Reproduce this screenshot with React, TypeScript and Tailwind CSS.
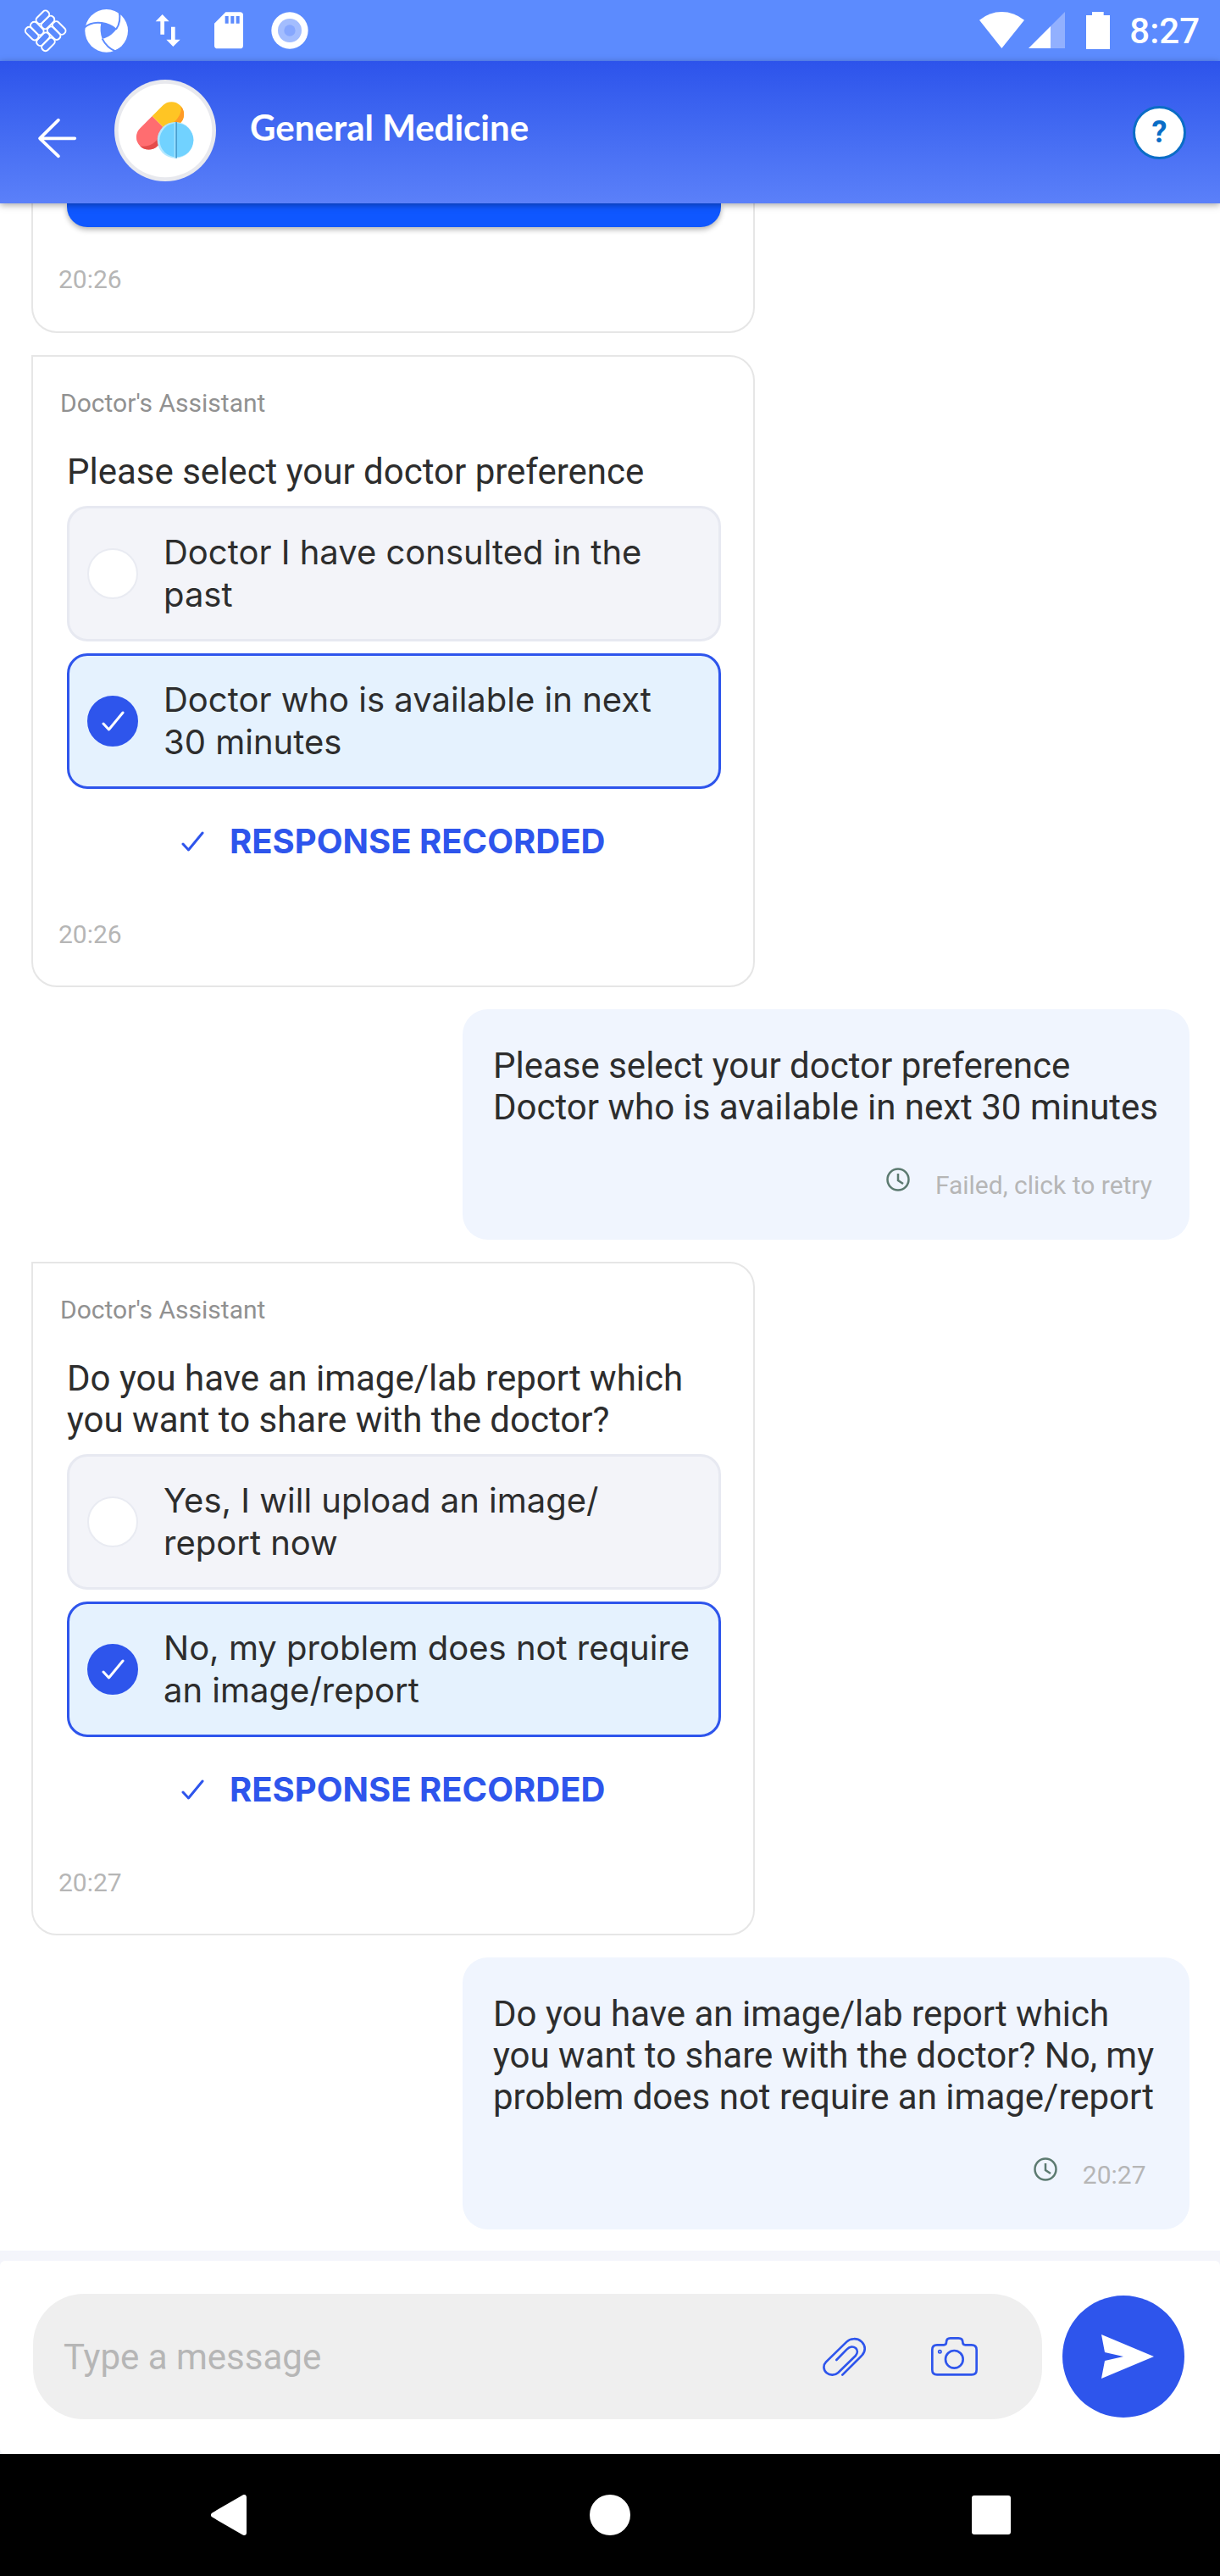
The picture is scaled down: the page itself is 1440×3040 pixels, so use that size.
import { useState } from "react";
import type { ReactNode } from "react";

function StatusBar() {
  return (
    <div className="flex h-[72px] items-center justify-between bg-[#5c8bfe] pr-6 pl-[18px] text-white">
      <div className="flex" aria-hidden="true">
        <svg className="size-[72px]" viewBox="54 0 216 216" fill="none" stroke="currentColor" strokeWidth="6">
          <g transform="translate(161 109) rotate(45)">
            <rect x="-54" y="-54" width="26" height="54" rx="12" />
            <rect x="-28" y="-54" width="26" height="54" rx="12" />
            <rect x="0" y="-54" width="54" height="26" rx="12" />
            <rect x="0" y="-28" width="54" height="26" rx="12" />
            <rect x="-54" y="2" width="54" height="26" rx="12" />
            <rect x="-54" y="28" width="54" height="26" rx="12" />
            <rect x="2" y="0" width="26" height="54" rx="12" />
            <rect x="28" y="0" width="26" height="54" rx="12" />
          </g>
        </svg>
        <svg className="size-[72px]" viewBox="270 0 216 216" fill="none">
          <circle cx="377" cy="109" r="76" fill="currentColor" />
          <path d="M358 82C380 84 398 92 411 104C398 122 382 133 362 137C355 120 354 100 358 82Z" fill="#5c8bfe" />
          <g stroke="#5c8bfe" strokeWidth="6">
            <path d="M298 98C316 82 338 78 360 81C382 84 398 92 411 104" />
            <path d="M411 104C424 86 427 62 421 36" />
            <path d="M362 137C371 155 384 172 410 182" />
          </g>
          <path d="M418 34L432 50L446 68L428 46Z" fill="#5c8bfe" />
          <path d="M400 182L424 170L428 186L404 190Z" fill="#5c8bfe" />
        </svg>
        <svg className="size-[72px]" viewBox="486 0 216 216" fill="currentColor">
          <path d="M575 51L599 76H582V122H568V76H551Z" />
          <path d="M613 165L589 140H606V95H620V140H638Z" />
        </svg>
        <svg className="size-[72px]" viewBox="702 0 216 216" fill="currentColor">
          <path d="M799 43H850Q861 43 861 54V161Q861 172 850 172H770Q759 172 759 161V83Z" />
          <path d="M797 57h12v26h-12zM817 57h12v26h-12zM836 57h12v26h-12z" fill="#5c8bfe" />
        </svg>
        <svg className="size-[72px]" viewBox="918 0 216 216">
          <circle cx="1026" cy="108" r="65" fill="#fff" />
          <circle cx="1026" cy="108" r="42" fill="#a3bdfe" />
          <circle cx="1026" cy="108" r="20" fill="#86a7fe" />
        </svg>
      </div>
      <div className="flex items-center">
        <svg className="h-[72px] w-[57px]" viewBox="165 0 171 216" fill="currentColor" aria-hidden="true">
          <path d="M171 71Q207 42 250 42T330 71L250 171Z" />
        </svg>
        <svg className="h-[72px] w-[48px]" viewBox="336 0 144 216" fill="currentColor" aria-hidden="true">
          <path d="M474 42V171H423V93Z" fill="#92b0fe" />
          <path d="M345 171L423 93V171Z" />
        </svg>
        <svg className="mx-5 h-[72px] w-[34px]" viewBox="540 0 102 216" fill="currentColor" aria-hidden="true">
          <path d="M570 42H611V54H633V174H549V54H570Z" />
        </svg>
        <span className="text-[42px] leading-[49px] font-medium">8:27</span>
      </div>
    </div>
  );
}

function PillsAvatar() {
  return (
    <svg className="mb-1 ml-11 size-[120px]" viewBox="405 282 360 360" role="img" aria-label="General Medicine">
      <defs>
        <clipPath id="capsule">
          <rect x="-101" y="-44" width="202" height="88" rx="44" />
        </clipPath>
      </defs>
      <circle cx="585" cy="462" r="180" fill="#e8e9ee" />
      <circle cx="585" cy="462" r="166" fill="#fff" />
      <g transform="translate(567 445) rotate(-45)">
        <g clipPath="url(#capsule)">
          <rect x="-102" y="-45" width="106" height="90" fill="#ff6d70" />
          <rect x="4" y="-45" width="98" height="90" fill="#ffc524" />
          <path d="M-102 0C-76 34-40 36-4 12V46H-102Z" fill="#e44c4c" />
          <path d="M100 2C92 22 60 30 20 24V46H102Z" fill="#ff9a26" />
        </g>
      </g>
      <circle cx="621" cy="496" r="64" fill="#b4e8ff" />
      <circle cx="625" cy="496" r="60" fill="#71d2ff" />
      <rect x="617" y="432" width="5" height="128" fill="#a2e2ff" />
      <rect x="622" y="432" width="5" height="128" fill="#4a9fcf" />
    </svg>
  );
}

function Header() {
  return (
    <header className="relative z-10 flex h-[168px] items-center bg-linear-to-b from-[#2d53eb] to-[#5b80f9] pr-10 pl-11 text-white shadow-[0_2px_8px_rgba(0,0,0,0.35)]">
      <button type="button" aria-label="Back" className="mt-[14px]">
        <svg className="h-[50px] w-[47px]" viewBox="132 414 141 150" fill="none" stroke="currentColor" strokeWidth="11" strokeLinecap="round" strokeLinejoin="round">
          <path d="M142 490H265M207 425L141 490L207 553" />
        </svg>
      </button>
      <PillsAvatar />
      <h1 className="mb-3 ml-10 flex-1 font-['Lato',sans-serif] text-[42px] leading-[50px] font-bold">General Medicine</h1>
      <button
        type="button"
        aria-label="Help"
        className="flex size-[63px] items-center justify-center rounded-full border-[3px] border-[#0a6dc6] bg-white text-[36px] leading-[42px] font-bold text-[#0a6dc6]"
      >
        ?
      </button>
    </header>
  );
}

function Check({ className }: { className: string }) {
  return (
    <svg className={className} viewBox="0 0 27 24" fill="none" stroke="currentColor" strokeWidth="3" strokeLinecap="round" strokeLinejoin="round" aria-hidden="true">
      <path d="M2 15L8.500 22L25 2" />
    </svg>
  );
}

type QuestionProps = {
  name: string;
  question: string;
  options: string[];
  initial: string;
  time: string;
};

function QuestionCard({ name, question, options, initial, time }: QuestionProps) {
  const [selected, setSelected] = useState(initial);
  return (
    <article className="w-5/8 rounded-[30px] rounded-tl-none border-2 border-[#e6e6e6] bg-white pt-[37px] pb-[42px]">
      <p className="pl-8 text-[30px] leading-9 text-[#919191]">Doctor's Assistant</p>
      <fieldset className="mt-[38px] pr-[38px] pl-10">
        <legend className="text-[42px] leading-[49px] text-[#2d2d2d]">{question}</legend>
        <div className="mt-4 flex flex-col gap-[14px] font-['Inter',sans-serif]">
          {options.map((option) => (
            <label
              key={option}
              className="flex min-h-[160px] items-center gap-[30px] rounded-[24px] border-[3px] border-[#e7e9f1] bg-[#f3f4f9] pr-6 pl-[21px] has-checked:border-[#2e55ec] has-checked:bg-[#e5f2fe]"
            >
              <span className="grid shrink-0 place-items-center">
                <input
                  type="radio"
                  name={name}
                  value={option}
                  checked={selected === option}
                  onChange={() => setSelected(option)}
                  className="peer size-[60px] appearance-none rounded-full border-2 border-[#e9ebf2] bg-white [grid-area:1/1] checked:border-[#2e55ec] checked:bg-[#2e55ec]"
                />
                <Check className="pointer-events-none hidden h-6 w-[27px] text-white [grid-area:1/1] peer-checked:block" />
              </span>
              <span className="text-[40px] leading-[50px] whitespace-pre-line text-[#2d2d2d]">{option}</span>
            </label>
          ))}
        </div>
      </fieldset>
      <p className="mt-[38px] flex items-center justify-center gap-[30px] font-['Inter',sans-serif] text-[40px] leading-[48px] font-bold text-[#2e55ec]">
        <Check className="h-6 w-[27px]" />
        RESPONSE RECORDED
      </p>
      <time className="mt-[68px] block pl-[30px] text-[30px] leading-9 text-[#b6b6b6]">{time}</time>
    </article>
  );
}

function Reply({ children, status }: { children: ReactNode; status: string }) {
  return (
    <article className="w-[64%] max-w-[858px] self-end rounded-[30px] bg-[#f0f5fe] pt-[42px] pr-8 pb-[46px] pl-9">
      <p className="text-[42px] leading-[49px] text-[#2d2d2d]">{children}</p>
      <div className="mt-[47px] flex items-start justify-end gap-[30px] pr-3 text-[30px] leading-9 text-[#b6b6b6]">
        <svg className="size-[28px]" viewBox="0 0 28 28" fill="none" stroke="#5c7a70" strokeWidth="2.500" aria-hidden="true">
          <circle cx="14" cy="14" r="12.500" />
          <path d="M14 7V15L20 19" />
        </svg>
        <span className="pt-[3px]">{status}</span>
      </div>
    </article>
  );
}

function Composer() {
  return (
    <footer className="bg-[#f4f5fb] pt-3">
      <form className="flex items-center gap-6 rounded-[6px] bg-white pt-[39px] pr-[42px] pb-[41px] pl-[39px]" onSubmit={(e) => e.preventDefault()}>
        <div className="flex h-[148px] min-w-0 flex-1 items-center rounded-[60px] bg-[#efefef] pr-[75px] pl-9 text-[#2e55ec]">
          <input
            type="text"
            aria-label="Message"
            placeholder="Type a message"
            className="h-full min-w-0 flex-1 bg-transparent text-[42px] text-[#2d2d2d] outline-none placeholder:text-[#b6b6b6]"
          />
          <button type="button" aria-label="Attach a file">
            <svg className="h-[47px] w-[53px]" viewBox="30 51 159 141" fill="none" stroke="currentColor" strokeWidth="8" strokeLinecap="round" strokeLinejoin="round">
              <path d="M82 132L119 94C129 83 142 84 150 90C158 98 157 109 149 118L88 177C77 187 59 188 47 178C35 168 34 150 45 139L118 68C131 55 155 54 169 66C186 80 186 102 172 116L103 185" />
            </svg>
          </button>
          <button type="button" aria-label="Take a photo" className="ml-[75px]">
            <svg className="h-12 w-[57px]" viewBox="414 51 171 144" fill="none" stroke="currentColor" strokeWidth="8" strokeLinejoin="round">
              <path d="M438 82H462Q471 82 471 72Q471 58 485 58H514Q529 58 529 72Q529 82 538 82H560Q578 82 578 99V170Q578 187 561 187H438Q421 187 421 170V99Q421 82 438 82Z" />
              <circle cx="499" cy="133" r="31" />
              <circle cx="448" cy="106" r="5" strokeWidth="5" />
            </svg>
          </button>
        </div>
        <button type="submit" aria-label="Send" className="flex size-[144px] shrink-0 items-center justify-center rounded-full bg-[#2e55ec] pl-[10px] text-white">
          <svg className="h-[52px] w-[62px]" viewBox="0 0 62 52" fill="currentColor">
            <path d="M0 0L62 26L0 52L4 31L26 26L4 21Z" />
          </svg>
        </button>
      </form>
    </footer>
  );
}

function NavigationBar() {
  return (
    <nav className="grid h-[144px] grid-cols-3 bg-black px-[45px]">
      <button type="button" aria-label="Back" className="grid place-items-center">
        <svg className="h-12 w-[42px]" viewBox="0 0 42 48" fill="#fff" stroke="#fff" strokeWidth="6" strokeLinejoin="round">
          <path d="M39 3V45L3 24Z" />
        </svg>
      </button>
      <button type="button" aria-label="Home" className="grid place-items-center">
        <span className="size-12 rounded-full bg-white" />
      </button>
      <button type="button" aria-label="Recent apps" className="grid place-items-center">
        <span className="size-[46px] rounded-[3px] bg-white" />
      </button>
    </nav>
  );
}

export default function App() {
  return (
    <div className="flex min-h-screen flex-col bg-white font-['Roboto',sans-serif]">
      <StatusBar />
      <Header />
      <main className="flex flex-1 flex-col gap-[26px] pr-9 pb-6 pl-[37px]">
        <article className="w-5/8 rounded-b-[30px] border-2 border-t-0 border-[#e6e6e6] bg-white pb-[43px]">
          <div className="pr-[38px] pl-10">
            <button type="button" aria-label="Submit" className="block h-7 w-full rounded-b-[24px] bg-[#0f57ff] shadow-[0_3px_6px_rgba(0,0,0,0.3)]" />
          </div>
          <time className="mt-11 block pl-[30px] text-[30px] leading-9 text-[#b6b6b6]">20:26</time>
        </article>
        <QuestionCard
          name="doctor-preference"
          question="Please select your doctor preference"
          options={["Doctor I have consulted in the past", "Doctor who is available in next 30 minutes"]}
          initial="Doctor who is available in next 30 minutes"
          time="20:26"
        />
        <Reply status="Failed, click to retry">Please select your doctor preference Doctor who is available in next 30 minutes</Reply>
        <QuestionCard
          name="share-report"
          question="Do you have an image/lab report which you want to share with the doctor?"
          options={["Yes, I will upload an image/\nreport now", "No, my problem does not require an image/report"]}
          initial="No, my problem does not require an image/report"
          time="20:27"
        />
        <Reply status={"20:27\u00a0"}>
          Do you have an image/lab report which you want to share with the doctor? No, my problem does not require an image/report
        </Reply>
      </main>
      <Composer />
      <NavigationBar />
    </div>
  );
}
